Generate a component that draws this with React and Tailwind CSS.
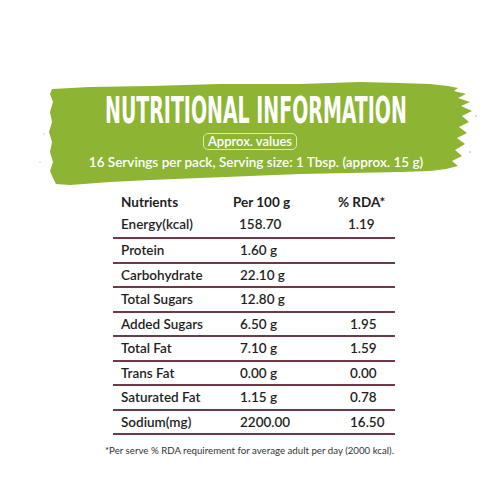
import React from "react";

const rows = [
  { name: "Protein", per: "1.60 g", rda: "" },
  { name: "Carbohydrate", per: "22.10 g", rda: "" },
  { name: "Total Sugars", per: "12.80 g", rda: "" },
  { name: "Added Sugars", per: "6.50 g", rda: "1.95" },
  { name: "Total Fat", per: "7.10 g", rda: "1.59" },
  { name: "Trans Fat", per: "0.00 g", rda: "0.00" },
  { name: "Saturated Fat", per: "1.15 g", rda: "0.78" },
  { name: "Sodium(mg)", per: "2200.00", rda: "16.50" },
];

// brush stroke behind the heading, coords are page px minus 72
const Brush = () => (
  <svg
    className="absolute inset-0 w-full h-full"
    viewBox="0 0 500 120"
    preserveAspectRatio="none"
  >
    <path
      fill="#8db533"
      d="M52 17 L90 15 L150 14 L220 12 L300 12 L360 10 L400 11 L430 12 L448 14 L458 16 L454 19 L466 22 L458 26 L470 30 L461 34 L472 39 L462 44 L469 50 L459 55 L467 61 L457 66 L465 72 L455 78 L462 84 L452 89 L458 94 L446 97 L430 99 L400 100 L350 101 L300 102 L250 104 L200 106 L150 108 L110 110 L70 113 L56 112 L53 106 L50 99 L53 90 L50 80 L52 70 L49 60 L52 50 L50 40 L53 30 L50 22 Z"
    />
    <circle cx="476" cy="44" r="0.8" fill="#9db860" />
    <circle cx="470" cy="80" r="0.8" fill="#9db860" />
    <circle cx="44" cy="62" r="0.7" fill="#c8c8c8" />
    <circle cx="40" cy="90" r="0.7" fill="#c8c8c8" />
  </svg>
);

const App = () => {
  return (
    <div
      className="w-[500px] h-[500px] bg-white overflow-hidden"
      style={{ fontFamily: "Lato, 'Noto Sans', sans-serif" }}
    >
      <div className="relative mt-[72px] h-[120px]">
        <Brush />
        <div className="relative flex flex-col items-center pt-[20px]">
          <div className="h-[36px] flex justify-center pl-[12px]">
            <span
              className="inline-block whitespace-nowrap text-white font-bold text-[38px] leading-[36px] scale-x-[0.555] origin-center"
              style={{ fontFamily: "'DejaVu Sans Condensed', 'DejaVu Sans', sans-serif" }}
            >
              NUTRITIONAL INFORMATION
            </span>
          </div>
          <span className="mt-[5px] border border-[#dcebb5] rounded-[5px] px-[4px] h-[17px] flex items-center text-white text-[13px] font-semibold">
            Approx. values
          </span>
          <span className="mt-[2px] pl-[12px] text-white text-[13.5px] font-semibold whitespace-nowrap">
            16 Servings per pack, Serving size: 1 Tbsp. (approx. 15 g)
          </span>
        </div>
      </div>

      <div className="-mt-[1px] ml-[113px] w-[282px] text-[13.5px] text-[#1e1e1e] font-semibold">
        <div className="h-[23px] flex items-center font-bold">
          <span className="w-[120px] pl-[8px]">Nutrients</span>
          <span className="w-[105px]">Per 100 g</span>
          <span>% RDA*</span>
        </div>
        <div className="h-[25px] pb-[2px] border-b-2 border-[#6e3a48] flex items-center">
          <span className="w-[126px] pl-[8px]">Energy(kcal)</span>
          <span className="w-[109px]">158.70</span>
          <span>1.19</span>
        </div>
        {rows.map((r) => (
          <div
            key={r.name}
            className="h-[24.5px] border-b-2 border-[#6e3a48] flex items-center"
          >
            <span className="w-[127px] pl-[8px]">{r.name}</span>
            <span className="w-[110px]">{r.per}</span>
            <span>{r.rda}</span>
          </div>
        ))}
      </div>

      <p className="ml-[105px] mt-[8px] text-[9.7px] text-[#333] whitespace-nowrap">
        *Per serve % RDA requirement for average adult per day (2000 kcal).
      </p>
    </div>
  );
};

export default App;
